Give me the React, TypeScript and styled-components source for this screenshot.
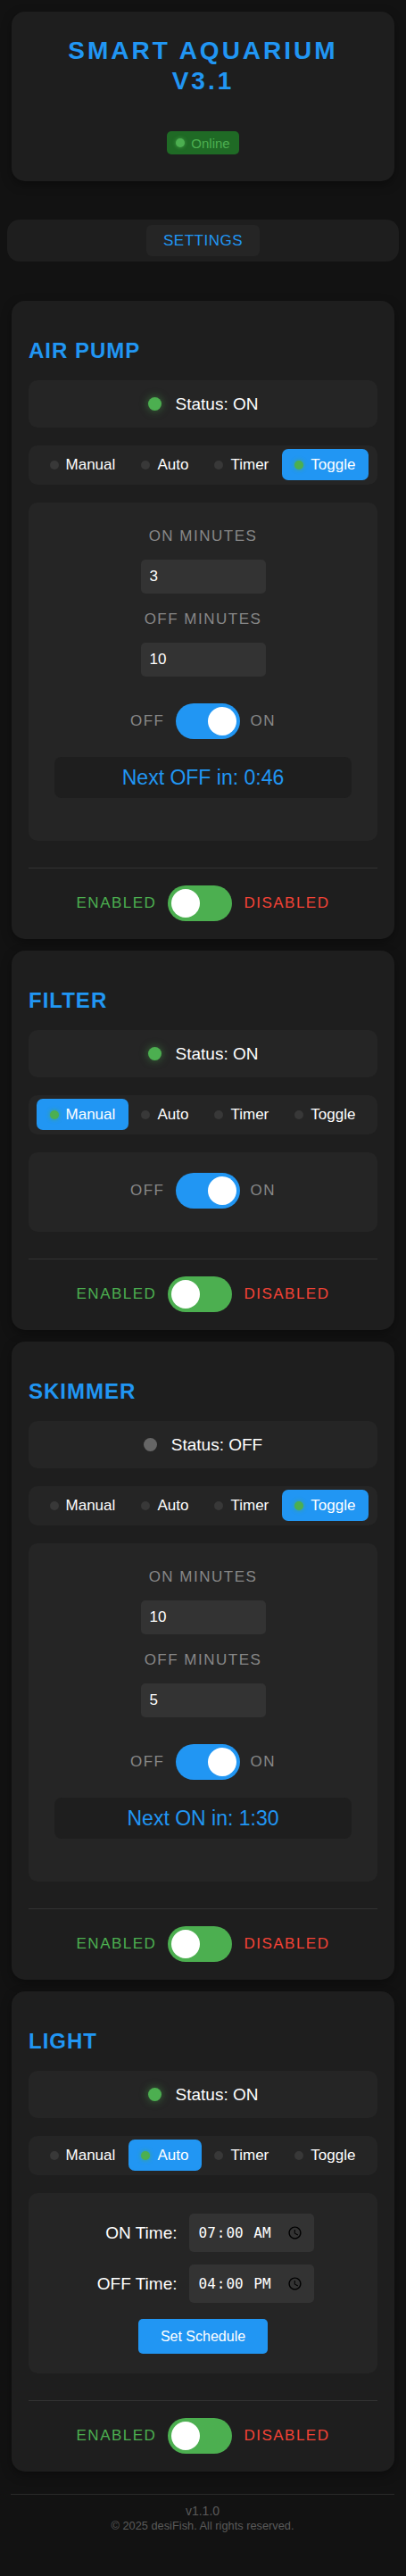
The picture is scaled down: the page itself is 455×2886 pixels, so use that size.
import React from "react";
import styled, { createGlobalStyle } from "styled-components";

const Global = createGlobalStyle`
  html, body { margin: 0; padding: 0; background: #121212; }
  body { font-family: "Liberation Sans", Arial, sans-serif; color: #fff; }
  * { box-sizing: border-box; }
`;

const FONT = `"Liberation Sans", Arial, sans-serif`;

const Page = styled.div`
  padding: 13px 8px 44px;
`;

const HeaderCard = styled.header`
  margin: 0 5px;
  background: #1e1e1e;
  border-radius: 15px;
  padding: 27px 20px 30px;
  text-align: center;
  box-shadow: 0 4px 12px rgba(0, 0, 0, 0.35);
`;

const Title = styled.h1`
  margin: 0 0 39px;
  font-size: 28px;
  line-height: 34px;
  font-weight: 700;
  letter-spacing: 3px;
  color: #2196f3;
`;

const TitleLine = styled.span`
  display: block;
`;

const OnlineBadge = styled.div`
  display: inline-flex;
  align-items: center;
  gap: 7px;
  height: 26px;
  padding: 0 10px;
  background: #1f6a25;
  border-radius: 5px;
  color: #4caf50;
  font-size: 15px;
`;

const BadgeDot = styled.span`
  width: 10px;
  height: 10px;
  border-radius: 50%;
  background: #4caf50;
  box-shadow: 0 0 4px rgba(76, 175, 80, 0.8);
`;

const SettingsBar = styled.nav`
  margin-top: 43px;
  background: #1e1e1e;
  border-radius: 14px;
  padding: 6px;
  display: flex;
  justify-content: center;
`;

const SettingsButton = styled.button`
  height: 35px;
  padding: 0 19px;
  background: #252525;
  border: none;
  border-radius: 6px;
  color: #2196f3;
  font-family: ${FONT};
  font-size: 17px;
  letter-spacing: 0.5px;
`;

const DeviceList = styled.main`
  margin-top: 44px;
  display: flex;
  flex-direction: column;
  gap: 13px;
`;

const Card = styled.section`
  margin: 0 5px;
  background: #1e1e1e;
  border-radius: 15px;
  padding: 19px 19px 20px;
  box-shadow: 0 4px 12px rgba(0, 0, 0, 0.35);
`;

const CardTitle = styled.h2`
  margin: 23px 0 19px;
  font-size: 24px;
  line-height: 28px;
  font-weight: 700;
  letter-spacing: 1px;
  color: #2196f3;
`;

const StatusBox = styled.div`
  height: 53px;
  background: #252525;
  border-radius: 10px;
  display: flex;
  align-items: center;
  justify-content: center;
  gap: 16px;
  font-size: 19px;
  color: #fff;
`;

const StatusDot = styled.span<{ $on: boolean }>`
  width: 15px;
  height: 15px;
  border-radius: 50%;
  background: ${(p) => (p.$on ? "#4caf50" : "#666")};
  box-shadow: ${(p) => (p.$on ? "0 0 10px rgba(76, 175, 80, 0.55)" : "none")};
`;

const ModeBar = styled.div`
  margin-top: 20px;
  display: flex;
  padding: 4px 10px 5px 9px;
  background: #252525;
  border-radius: 10px;
`;

const ModeButton = styled.button<{ $active: boolean }>`
  flex: 1 1 auto;
  height: 35px;
  padding: 0;
  display: flex;
  align-items: center;
  justify-content: center;
  gap: 8px;
  border: none;
  border-radius: 7px;
  background: ${(p) => (p.$active ? "#2196f3" : "transparent")};
  color: #fff;
  font-family: ${FONT};
  font-size: 17px;
`;

const ModeDot = styled.span<{ $active: boolean }>`
  width: 10px;
  height: 10px;
  border-radius: 50%;
  background: ${(p) => (p.$active ? "#4caf50" : "#383838")};
  box-shadow: ${(p) => (p.$active ? "0 0 5px rgba(76, 175, 80, 0.8)" : "none")};
`;

const Panel = styled.div<{ $pad: string }>`
  margin-top: 20px;
  background: #252525;
  border-radius: 10px;
  padding: ${(p) => p.$pad};
`;

const FieldStack = styled.div`
  display: flex;
  flex-direction: column;
  gap: 19px;
  margin-bottom: 30px;
`;

const Field = styled.label`
  display: flex;
  flex-direction: column;
  align-items: center;
  gap: 16px;
`;

const FieldLabel = styled.span`
  font-size: 17px;
  line-height: 20px;
  letter-spacing: 1.5px;
  color: #888;
  text-transform: uppercase;
`;

const NumberInput = styled.input`
  width: 140px;
  height: 38px;
  background: #333;
  border: none;
  border-radius: 5px;
  color: #fff;
  font-family: ${FONT};
  font-size: 17px;
  padding: 0 10px;
  outline: none;
`;

const SwitchRow = styled.div`
  display: flex;
  align-items: center;
  justify-content: center;
  gap: 12px;
`;

const SideLabel = styled.span<{ $color: string }>`
  font-size: 17px;
  letter-spacing: 1.5px;
  color: ${(p) => p.$color};
`;

const Switch = styled.span<{ $on: boolean; $color: string }>`
  width: 72px;
  height: 40px;
  border-radius: 20px;
  padding: 4px;
  display: flex;
  justify-content: ${(p) => (p.$on ? "flex-end" : "flex-start")};
  background: ${(p) => p.$color};
`;

const Knob = styled.span`
  width: 32px;
  height: 32px;
  border-radius: 50%;
  background: #fff;
`;

const NextBox = styled.div`
  margin: 20px 0 20px;
  height: 46px;
  background: #1e1e1e;
  border-radius: 8px;
  display: flex;
  align-items: center;
  justify-content: center;
  color: #2196f3;
  font-size: 23px;
`;

const EnableRow = styled(SwitchRow)`
  margin-top: 30px;
  border-top: 1px solid #333;
  padding-top: 19px;
  gap: 13px;
`;

const TimeGrid = styled.div`
  display: grid;
  grid-template-columns: 95px 140px;
  column-gap: 13px;
  row-gap: 14px;
  justify-content: center;
  align-items: center;
`;

const TimeLabel = styled.label`
  text-align: right;
  font-size: 19px;
  color: #fff;
`;

const TimeInput = styled.input`
  width: 140px;
  height: 43px;
  background: #333;
  border: none;
  border-radius: 5px;
  color: #fff;
  font-family: "DejaVu Sans Mono", monospace;
  font-size: 16px;
  padding: 0 10px;
  outline: none;
`;

const ButtonRow = styled.div`
  display: flex;
  justify-content: center;
  margin-top: 18px;
`;

const PrimaryButton = styled.button`
  width: 145px;
  height: 39px;
  border: none;
  border-radius: 5px;
  background: #2196f3;
  color: #fff;
  font-family: ${FONT};
  font-size: 16px;
`;

const Footer = styled.footer`
  margin: 25px 5px 0 4px;
  border-top: 1px solid #2a2a2a;
  padding-top: 9px;
  text-align: center;
  color: #5a5a5a;
`;

const Version = styled.div`
  font-size: 14px;
  line-height: 18px;
`;

const Copy = styled.div`
  font-size: 12.8px;
  line-height: 16px;
`;

const MODES = ["Manual", "Auto", "Timer", "Toggle"];

type Device = {
  name: string;
  on: boolean;
  mode: string;
};

function ModeSelector({ mode }: { mode: string }) {
  return (
    <ModeBar>
      {MODES.map((m) => (
        <ModeButton key={m} $active={m === mode}>
          <ModeDot $active={m === mode} />
          {m}
        </ModeButton>
      ))}
    </ModeBar>
  );
}

function PowerSwitch() {
  return (
    <SwitchRow>
      <SideLabel $color="#888">OFF</SideLabel>
      <Switch $on $color="#2196f3">
        <Knob />
      </Switch>
      <SideLabel $color="#888">ON</SideLabel>
    </SwitchRow>
  );
}

function EnableSwitch() {
  return (
    <EnableRow>
      <SideLabel $color="#4caf50">ENABLED</SideLabel>
      <Switch $on={false} $color="#4caf50">
        <Knob />
      </Switch>
      <SideLabel $color="#f44336">DISABLED</SideLabel>
    </EnableRow>
  );
}

function DeviceCard({ d, children }: { d: Device; children: React.ReactNode }) {
  return (
    <Card>
      <CardTitle>{d.name}</CardTitle>
      <StatusBox>
        <StatusDot $on={d.on} />
        Status: {d.on ? "ON" : "OFF"}
      </StatusBox>
      <ModeSelector mode={d.mode} />
      {children}
      <EnableSwitch />
    </Card>
  );
}

function TimerPanel({ on, off, next }: { on: string; off: string; next: string }) {
  return (
    <Panel $pad="28px 29px 28px">
      <FieldStack>
        <Field>
          <FieldLabel>On Minutes</FieldLabel>
          <NumberInput type="text" inputMode="numeric" defaultValue={on} />
        </Field>
        <Field>
          <FieldLabel>Off Minutes</FieldLabel>
          <NumberInput type="text" inputMode="numeric" defaultValue={off} />
        </Field>
      </FieldStack>
      <PowerSwitch />
      <NextBox>{next}</NextBox>
    </Panel>
  );
}

export default function App() {
  return (
    <>
      <Global />
      <Page>
        <HeaderCard>
          <Title>
            <TitleLine>SMART AQUARIUM</TitleLine>
            <TitleLine>V3.1</TitleLine>
          </Title>
          <OnlineBadge>
            <BadgeDot />
            Online
          </OnlineBadge>
        </HeaderCard>

        <SettingsBar>
          <SettingsButton>SETTINGS</SettingsButton>
        </SettingsBar>

        <DeviceList>
          <DeviceCard d={{ name: "AIR PUMP", on: true, mode: "Toggle" }}>
            <TimerPanel on="3" off="10" next="Next OFF in: 0:46" />
          </DeviceCard>

          <DeviceCard d={{ name: "FILTER", on: true, mode: "Manual" }}>
            <Panel $pad="23px 29px 26px">
              <PowerSwitch />
            </Panel>
          </DeviceCard>

          <DeviceCard d={{ name: "SKIMMER", on: false, mode: "Toggle" }}>
            <TimerPanel on="10" off="5" next="Next ON in: 1:30" />
          </DeviceCard>

          <DeviceCard d={{ name: "LIGHT", on: true, mode: "Auto" }}>
            <Panel $pad="23px 20px 22px">
              <TimeGrid>
                <TimeLabel htmlFor="on-time">ON Time:</TimeLabel>
                <TimeInput id="on-time" type="time" defaultValue="07:00" />
                <TimeLabel htmlFor="off-time">OFF Time:</TimeLabel>
                <TimeInput id="off-time" type="time" defaultValue="16:00" />
              </TimeGrid>
              <ButtonRow>
                <PrimaryButton>Set Schedule</PrimaryButton>
              </ButtonRow>
            </Panel>
          </DeviceCard>
        </DeviceList>

        <Footer>
          <Version>v1.1.0</Version>
          <Copy>© 2025 desiFish. All rights reserved.</Copy>
        </Footer>
      </Page>
    </>
  );
}
